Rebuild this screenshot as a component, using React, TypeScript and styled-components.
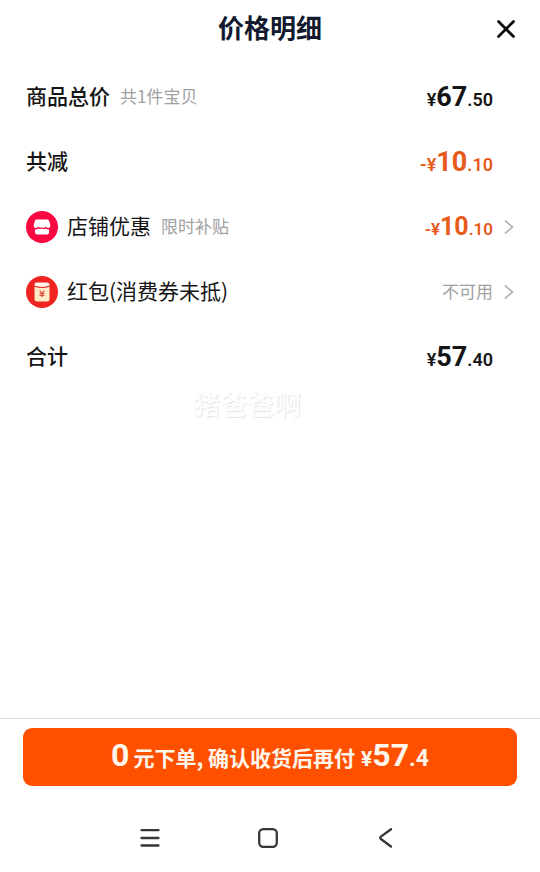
import React from 'react';
import styled, { createGlobalStyle } from 'styled-components';

const GlobalStyle = createGlobalStyle`
  * { box-sizing: border-box; }
  body {
    margin: 0;
    background: #fff;
    color: #151515;
    font-family: "Noto Sans CJK SC", sans-serif;
  }
  button { font: inherit; color: inherit; border: 0; padding: 0; background: none; cursor: pointer; }
  svg { display: block; }
`;

const Sheet = styled.main`
  display: flex;
  flex-direction: column;
  min-height: 100vh;
`;

const Header = styled.header`
  display: grid;
  grid-template-columns: 48px 1fr 48px;
  align-items: center;
  height: 64px;
  padding: 0 18px 10px;
`;

const Title = styled.h1`
  grid-column: 2;
  margin: 0;
  text-align: center;
  font-size: 26px;
  line-height: 40px;
  font-weight: 700;
  color: #111a2e;
`;

const CloseButton = styled.button`
  display: grid;
  place-items: center;
  width: 32px;
  height: 32px;
  justify-self: end;
  margin-top: 4px;
`;

const List = styled.ul`
  list-style: none;
  margin: 0;
  padding: 0 25px 0 26px;
`;

const Row = styled.li`
  display: grid;
  grid-template-columns: 1fr auto 22px;
  align-items: center;
  height: 65px;
`;

const RowLabel = styled.div`
  display: flex;
  align-items: center;
`;

const Name = styled.span<{ $strong?: boolean }>`
  padding-bottom: 4px;
  font-size: 21px;
  line-height: 32px;
  font-weight: ${(p) => (p.$strong ? 500 : 400)};
`;

const Note = styled.span`
  margin-left: 10px;
  padding-bottom: 2px;
  font-size: 17px;
  line-height: 32px;
  font-weight: 400;
  color: #a0a0a0;
`;

const Badge = styled.span`
  margin-right: 9px;
`;

const Amount = styled.span<{ $accent?: boolean; $small: number }>`
  display: flex;
  align-items: baseline;
  padding-top: 3px;
  font-family: Roboto, "Noto Sans CJK SC", sans-serif;
  font-size: ${(p) => p.$small}px;
  line-height: 32px;
  font-weight: 600;
  color: ${(p) => (p.$accent ? '#e8591c' : '#151515')};
`;

const Whole = styled.span<{ $size: number }>`
  font-size: ${(p) => p.$size}px;
  font-weight: 700;
`;

const ChevronButton = styled.button`
  justify-self: end;
  width: 12px;
  height: 20px;
`;

const Watermark = styled.div`
  padding-right: 46px;
  text-align: center;
  font-size: 27px;
  line-height: 29px;
  font-weight: 500;
  color: #fdfdfd;
  text-shadow: 1px 1px 1px #e4e4e8;
`;

const Footer = styled.footer`
  margin-top: auto;
  padding: 9px 23px 0;
  border-top: 1px solid #dedede;
`;

const PayButton = styled.button`
  display: flex;
  align-items: baseline;
  justify-content: center;
  width: 100%;
  height: 58px;
  border-radius: 9px;
  background: #ff5000;
  color: #fff6ec;
  font-size: 21px;
  line-height: 54px;
  font-weight: 700;
`;

const PayNumber = styled.span<{ $size: number }>`
  font-family: Roboto, sans-serif;
  font-size: ${(p) => p.$size}px;
`;

const PayText = styled.span`
  margin: 0 6px 0 4px;
`;

const SystemNav = styled.nav`
  display: flex;
  justify-content: center;
  gap: 98px;
  padding: 42px 4px 24px 0;
`;

const NavButton = styled.button`
  width: 20px;
  height: 20px;
`;

function ShopIcon() {
  return (
    <svg width="32" height="32" viewBox="0 0 32 32" aria-hidden="true">
      <circle cx="16" cy="16" r="16" fill="#fb0742" />
      <path d="M10.6 8.5h10.8q1.3 0 1.7 1.2l1.2 4.2q.3 3-2.3 3-1.8 0-2.5-1.3-1.2 2-3.5 .6-2.3 1.4-3.5-.6-.7 1.3-2.5 1.3-2.6 0-2.3-3l1.2-4.2q.4-1.2 1.700-1.200z" fill="#fff" />
      <path d="M9 18.300q2 .4 3.600-.8 1.800 1 3.400 0 1.600 1 3.400 0 1.600 1.200 3.600.8v3.300q0 2-2 2H11q-2 0-2-2z" fill="#fff" />
    </svg>
  );
}

function PacketIcon() {
  return (
    <svg width="32" height="32" viewBox="0 0 32 32" aria-hidden="true">
      <circle cx="16" cy="16" r="16" fill="#ef2420" />
      <path d="M8.500 8.500Q8.500 6.500 10.500 6.500h11q2 0 2 2v1.300q-7.500 2.300-15 0z" fill="#fff3ec" />
      <path d="M8.500 10.800q7.500 2.400 15 0V23q0 2.500-2.500 2.500H11q-2.500 0-2.500-2.500z" fill="#ffebc5" />
      <path d="M13.600 14.500l2.400 3 2.400-3M13.500 17.700h5M13.500 19.500h5M16 17.500v3.800" fill="none" stroke="#d9503f" strokeWidth="1.200" />
    </svg>
  );
}

function Chevron() {
  return (
    <svg width="12" height="20" viewBox="0 0 12 20" fill="none" aria-hidden="true">
      <path d="M2 3.500l7.500 6.500L2 16.500" stroke="#b4b4b4" strokeWidth="1.700" />
    </svg>
  );
}

interface PriceProps {
  whole: string;
  cents: string;
  minus?: boolean;
  size?: number;
  small?: number;
}

function Price({ whole, cents, minus, size = 27, small = 18 }: PriceProps) {
  return (
    <Amount $accent={minus} $small={small}>
      {minus ? '-¥' : '¥'}
      <Whole $size={size}>{whole}</Whole>.{cents}
    </Amount>
  );
}

export default function App() {
  return (
    <>
      <GlobalStyle />
      <Sheet>
        <Header>
          <Title>价格明细</Title>
          <CloseButton type="button" aria-label="关闭">
            <svg width="20" height="20" viewBox="0 0 20 20" fill="none">
              <path d="M2.500 2.500l15 15M17.500 2.500l-15 15" stroke="#0c0c0c" strokeWidth="2.800" strokeLinecap="round" />
            </svg>
          </CloseButton>
        </Header>
        <List>
          <Row>
            <RowLabel>
              <Name $strong>商品总价</Name>
              <Note>共1件宝贝</Note>
            </RowLabel>
            <Price whole="67" cents="50" />
          </Row>
          <Row>
            <RowLabel><Name $strong>共减</Name></RowLabel>
            <Price whole="10" cents="10" minus />
          </Row>
          <Row>
            <RowLabel>
              <Badge><ShopIcon /></Badge>
              <Name>店铺优惠</Name>
              <Note>限时补贴</Note>
            </RowLabel>
            <Price whole="10" cents="10" minus size={25} small={17} />
            <ChevronButton type="button" aria-label="店铺优惠"><Chevron /></ChevronButton>
          </Row>
          <Row>
            <RowLabel>
              <Badge><PacketIcon /></Badge>
              <Name>红包(消费券未抵)</Name>
            </RowLabel>
            <Note>不可用</Note>
            <ChevronButton type="button" aria-label="红包"><Chevron /></ChevronButton>
          </Row>
          <Row>
            <RowLabel><Name $strong>合计</Name></RowLabel>
            <Price whole="57" cents="40" />
          </Row>
        </List>
        <Watermark>猪爸爸啊</Watermark>
        <Footer>
          <PayButton type="button">
            <PayNumber $size={32}>0</PayNumber>
            <PayText>元下单, 确认收货后再付</PayText>
            <PayNumber $size={21}>¥</PayNumber>
            <PayNumber $size={32}>57</PayNumber>
            <PayNumber $size={23}>.4</PayNumber>
          </PayButton>
          <SystemNav>
            <NavButton type="button" aria-label="菜单">
              <svg width="20" height="20" viewBox="0 0 20 20" fill="none">
                <path d="M1.500 2.200h17M1.500 10h17M1.500 17.500h17" stroke="#363638" strokeWidth="2.300" strokeLinecap="round" />
              </svg>
            </NavButton>
            <NavButton type="button" aria-label="主页">
              <svg width="20" height="20" viewBox="0 0 20 20" fill="none">
                <rect x="1.200" y="1.200" width="17.600" height="17.600" rx="4" stroke="#363638" strokeWidth="2.300" />
              </svg>
            </NavButton>
            <NavButton type="button" aria-label="返回">
              <svg width="20" height="20" viewBox="0 0 20 20" fill="none">
                <path d="M15 1.200L4.900 8.600q-1.500 1.200 0 2.400L15 18.500" stroke="#363638" strokeWidth="2.300" strokeLinecap="round" />
              </svg>
            </NavButton>
          </SystemNav>
        </Footer>
      </Sheet>
    </>
  );
}
